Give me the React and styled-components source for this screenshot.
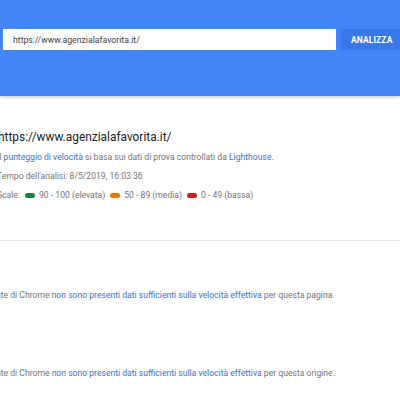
import React from "react";
import styled, { createGlobalStyle } from "styled-components";

const Global = createGlobalStyle`
  html, body { margin: 0; padding: 0; background: #fff; overflow: hidden; }
  body { font-family: Roboto, "Noto Sans", "Liberation Sans", sans-serif; }
`;

const Header = styled.header`
  height: 96px;
  background: #4285f4;
  box-shadow: 0 1px 3px rgba(0, 0, 0, 0.25);
  display: flex;
  align-items: flex-start;
  padding: 29px 0 0 3px;
  box-sizing: border-box;
  gap: 5px;
  position: relative;
  z-index: 1;
`;

const UrlInput = styled.div`
  width: 333px;
  height: 21px;
  background: #fff;
  box-sizing: border-box;
  padding: 0 10px;
  display: flex;
  align-items: center;
  font-size: 8.7px;
  color: #444;
  flex-shrink: 0;
`;

const AnalyzeButton = styled.button`
  height: 21px;
  min-width: 80px;
  border: none;
  background: #3b78e7;
  color: #fff;
  font-family: Roboto, "Liberation Sans", sans-serif;
  font-weight: 700;
  font-size: 8.5px;
  letter-spacing: 0.1px;
  padding: 0 10px;
  text-align: left;
  flex-shrink: 0;
`;

const Main = styled.main`
  margin-left: -150px;
  width: 700px;
`;

const Summary = styled.section`
  display: flex;
  padding-top: 30px;
  height: 145px;
  border-bottom: 1px solid #e6e6e6;
  box-sizing: border-box;
`;

const GaugeColumn = styled.div`
  width: 147px;
  flex-shrink: 0;
`;

const SummaryText = styled.div`
  display: flex;
  flex-direction: column;
`;

const UrlTitle = styled.h1`
  margin: 0 0 0 1px;
  font-weight: 400;
  font-size: 11.9px;
  color: #222;
  line-height: 22px;
`;

const Line = styled.p`
  margin: 0;
  font-size: 8.6px;
  line-height: 19px;
  color: #757575;
  display: flex;
  align-items: center;
  white-space: nowrap;
`;

const Link = styled.a`
  color: #4170c8;
  text-decoration: none;
`;

const Pill = styled.span`
  display: inline-block;
  width: 10px;
  height: 5px;
  border-radius: 3px;
  background: ${(p) => p.$color};
  margin: 0 4px 0 ${(p) => p.$gap}px;
`;

const FieldBlock = styled.section`
  height: ${(p) => p.$h}px;
  padding-left: 33px;
  display: flex;
  align-items: flex-end;
`;

const FieldText = styled.p`
  margin: 0;
  font-size: 8.6px;
  line-height: 16px;
  color: #757575;
  white-space: nowrap;
`;

export default function App() {
  return (
    <>
      <Global />
      <Header>
        <UrlInput>https://www.agenzialafavorita.it/</UrlInput>
        <AnalyzeButton>ANALIZZA</AnalyzeButton>
      </Header>
      <Main>
        <Summary>
          <GaugeColumn />
          <SummaryText>
            <UrlTitle>https://www.agenzialafavorita.it/</UrlTitle>
            <Line>
              Il&nbsp;<Link>punteggio di velocità</Link>&nbsp;si basa sui dati di prova controllati da&nbsp;<Link>Lighthouse</Link>.
            </Line>
            <Line>Tempo dell'analisi: 8/5/2019, 16:03:36</Line>
            <Line>
              Scale:
              <Pill $color="#178239" $gap={5} />90 - 100 (elevata)
              <Pill $color="#e67700" $gap={5} />50 - 89 (media)
              <Pill $color="#c7221f" $gap={5} />0 - 49 (bassa)
            </Line>
          </SummaryText>
        </Summary>
        <FieldBlock $h={62}>
          <FieldText>
            Nel Report sull'esperienza utente di Chrome <Link>non sono presenti dati sufficienti sulla velocità effettiva</Link> per questa pagina.
          </FieldText>
        </FieldBlock>
        <FieldBlock $h={78}>
          <FieldText>
            Nel Report sull'esperienza utente di Chrome <Link>non sono presenti dati sufficienti sulla velocità effettiva</Link> per questa origine.
          </FieldText>
        </FieldBlock>
      </Main>
    </>
  );
}
